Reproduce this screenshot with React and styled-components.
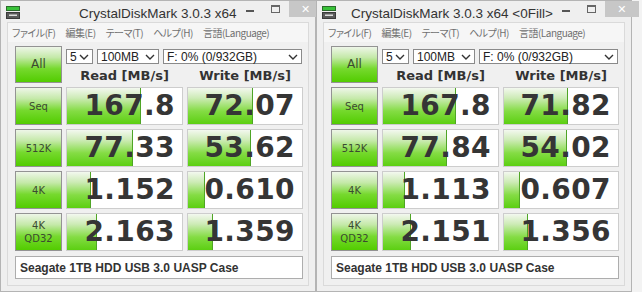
import React from 'react';
import styled, { createGlobalStyle } from 'styled-components';

const GlobalStyle = createGlobalStyle`
  body {
    margin: 0;
    background: #f3f3f3;
    font-family: "DejaVu Sans", sans-serif;
  }
`;

const Desktop = styled.main`
  display: flex;
  width: 642px;
  height: 292px;
  overflow: hidden;
`;

const Window = styled.section`
  display: flex;
  flex-direction: column;
  box-sizing: border-box;
  width: 316px;
  height: 292px;
  border: 1px solid #b4b4b4;
  background: #efefef;
`;

const TitleBar = styled.header`
  display: flex;
  align-items: flex-start;
  height: 21px;
`;

const AppIcon = styled.svg`
  flex: none;
  margin: 5px 0 0 5px;
`;

const TitleText = styled.div`
  flex: 1;
  padding: 4px 0 0 ${(p) => p.$pad}px;
  text-align: ${(p) => p.$align};
  font-family: "Liberation Sans", sans-serif;
  font-size: 13.5px;
  line-height: 17px;
  color: #333;
  white-space: nowrap;
`;

const WinButton = styled.div`
  display: flex;
  align-items: center;
  justify-content: center;
  flex: none;
  width: ${(p) => p.$w}px;
  height: 16px;
  background: ${(p) => p.$bg || 'transparent'};
  color: ${(p) => p.$fg || '#444'};
  font-family: "DejaVu Sans", sans-serif;
  font-size: 11px;
  font-weight: bold;
`;

const MinGlyph = styled.span`
  width: 8px;
  height: 2px;
  margin-top: 3px;
  background: #555;
`;

const MaxGlyph = styled.span`
  box-sizing: border-box;
  width: 9px;
  height: 8px;
  border: 1px solid #666;
  border-top-width: 2px;
`;

const Client = styled.div`
  display: flex;
  flex-direction: column;
  flex: 1;
  margin: 0 6px 5px 6px;
  border: 1px solid #dadada;
  background: #f0f0f0;
`;

const MenuBar = styled.nav`
  display: flex;
  gap: 10px;
  height: 19px;
  padding-left: 4px;
  background: #f6f6f6;
  font-family: "Noto Sans CJK JP", sans-serif;
  font-size: 10px;
  font-feature-settings: "palt";
  letter-spacing: -0.5px;
  line-height: 19px;
  color: #707070;
`;

const Panel = styled.div`
  display: grid;
  grid-template-columns: 47px 117px 116px;
  grid-template-rows: 37px repeat(4, 38px) 24px;
  column-gap: 4px;
  row-gap: 4px;
  padding: 4px 8px 0 7px;
`;

const GreenButton = styled.div`
  display: flex;
  flex-direction: column;
  align-items: center;
  justify-content: center;
  box-sizing: border-box;
  border: 1px solid #939393;
  background: linear-gradient(180deg, #eef6e8 0%, #c4e9a8 30%, #76d92e 62%, #52cc00 100%);
  color: #3b4a30;
  font-size: ${(p) => (p.$big ? 12 : 10)}px;
  line-height: 13px;
`;

const TopControls = styled.div`
  grid-column: 2 / 4;
  display: flex;
  flex-direction: column;
`;

const SelectRow = styled.div`
  display: flex;
  gap: 4px;
  margin-top: 3px;
`;

const Select = styled.div`
  display: flex;
  align-items: center;
  justify-content: space-between;
  box-sizing: border-box;
  width: ${(p) => p.$w}px;
  height: 15px;
  padding: 0 3px 0 3px;
  border: 1px solid #8a8a8a;
  background: #fff;
  font-family: "Liberation Sans", sans-serif;
  font-size: 12px;
  color: #222;
`;

const HeaderRow = styled.div`
  display: grid;
  grid-template-columns: 117px 116px;
  column-gap: 4px;
  margin-top: 3px;
`;

const Header = styled.div`
  text-align: center;
  font-size: 13px;
  font-weight: bold;
  line-height: 17px;
  color: #333;
`;

const ResultCell = styled.div`
  box-sizing: border-box;
  border: 1px solid #cdcdcd;
  background-color: #fff;
  background-image: linear-gradient(#4fa526, #4fa526),
    linear-gradient(180deg, #f3f8ef 0%, #cdebb6 28%, #84dc44 64%, #5ccf12 100%);
  background-size: 1px 100%, var(--w) 100%;
  background-position: calc(var(--w) - 1px) 0, 0 0;
  background-repeat: no-repeat;
  padding-right: 7px;
  text-align: right;
  font-size: 28px;
  font-weight: bold;
  line-height: 36px;
  letter-spacing: 0.4px;
  color: #353535;
`;

const Comment = styled.div`
  grid-column: 1 / -1;
  margin-top: 1px;
  box-sizing: border-box;
  border: 1px solid #adadad;
  background: #fff;
  padding-left: 4px;
  font-family: "Liberation Sans", sans-serif;
  font-size: 12px;
  font-weight: bold;
  line-height: 22px;
  color: #333;
`;

const Chevron = () => (
  <svg width="10" height="6" viewBox="0 0 10 6">
    <path d="M1 1 L5 5 L9 1" fill="none" stroke="#333" strokeWidth="1.4" />
  </svg>
);

const DiskIcon = () => (
  <AppIcon width="15" height="13" viewBox="0 0 15 13">
    <rect x="0.5" y="0.5" width="13" height="4" fill="#39c239" stroke="#2b6b2b" />
    <rect x="0.5" y="6.5" width="13" height="6" fill="#5a5a5a" stroke="#3a3a3a" />
    <rect x="3" y="8.5" width="8" height="1.5" fill="#dcdcdc" />
  </AppIcon>
);

const windows = [
  {
    title: 'CrystalDiskMark 3.0.3 x64',
    align: 'center',
    pad: 58,
    rows: [
      { label: ['Seq'], read: ['167.8', 74], write: ['72.07', 65] },
      { label: ['512K'], read: ['77.33', 66], write: ['53.62', 63] },
      { label: ['4K'], read: ['1.152', 24], write: ['0.610', 17] },
      { label: ['4K', 'QD32'], read: ['2.163', 30], write: ['1.359', 25] },
    ],
  },
  {
    title: 'CrystalDiskMark 3.0.3 x64 <0Fill>',
    align: 'left',
    pad: 14,
    rows: [
      { label: ['Seq'], read: ['167.8', 73], write: ['71.82', 64] },
      { label: ['512K'], read: ['77.84', 64], write: ['54.02', 63] },
      { label: ['4K'], read: ['1.113', 22], write: ['0.607', 16] },
      { label: ['4K', 'QD32'], read: ['2.151', 28], write: ['1.356', 24] },
    ],
  },
];

const menus = ['ファイル(F)', '編集(E)', 'テーマ(T)', 'ヘルプ(H)', '言語(Language)'];

const Result = ({ value, bar }) => (
  <ResultCell style={{ '--w': `${bar}px` }}>{value}</ResultCell>
);

const BenchWindow = ({ title, align, pad, rows }) => (
  <Window>
    <TitleBar>
      <DiskIcon />
      <TitleText $align={align} $pad={pad}>{title}</TitleText>
      <WinButton $w={26}><MinGlyph /></WinButton>
      <WinButton $w={26}><MaxGlyph /></WinButton>
      <WinButton $w={34} $bg="#c7c7c7" $fg="#fff">✕</WinButton>
    </TitleBar>
    <Client>
      <MenuBar>
        {menus.map((m) => (
          <span key={m}>{m}</span>
        ))}
      </MenuBar>
      <Panel>
        <GreenButton $big>All</GreenButton>
        <TopControls>
          <SelectRow>
            <Select $w={27}>5<Chevron /></Select>
            <Select $w={62}>100MB<Chevron /></Select>
            <Select $w={139}>F: 0% (0/932GB)<Chevron /></Select>
          </SelectRow>
          <HeaderRow>
            <Header>Read [MB/s]</Header>
            <Header>Write [MB/s]</Header>
          </HeaderRow>
        </TopControls>
        {rows.map((r) => (
          <React.Fragment key={r.label.join('')}>
            <GreenButton>
              {r.label.map((l) => (
                <span key={l}>{l}</span>
              ))}
            </GreenButton>
            <Result value={r.read[0]} bar={r.read[1]} />
            <Result value={r.write[0]} bar={r.write[1]} />
          </React.Fragment>
        ))}
        <Comment>Seagate 1TB HDD USB 3.0 UASP Case</Comment>
      </Panel>
    </Client>
  </Window>
);

const App = () => (
  <>
    <GlobalStyle />
    <Desktop>
      {windows.map((w) => (
        <BenchWindow key={w.title} {...w} />
      ))}
    </Desktop>
  </>
);

export default App;
